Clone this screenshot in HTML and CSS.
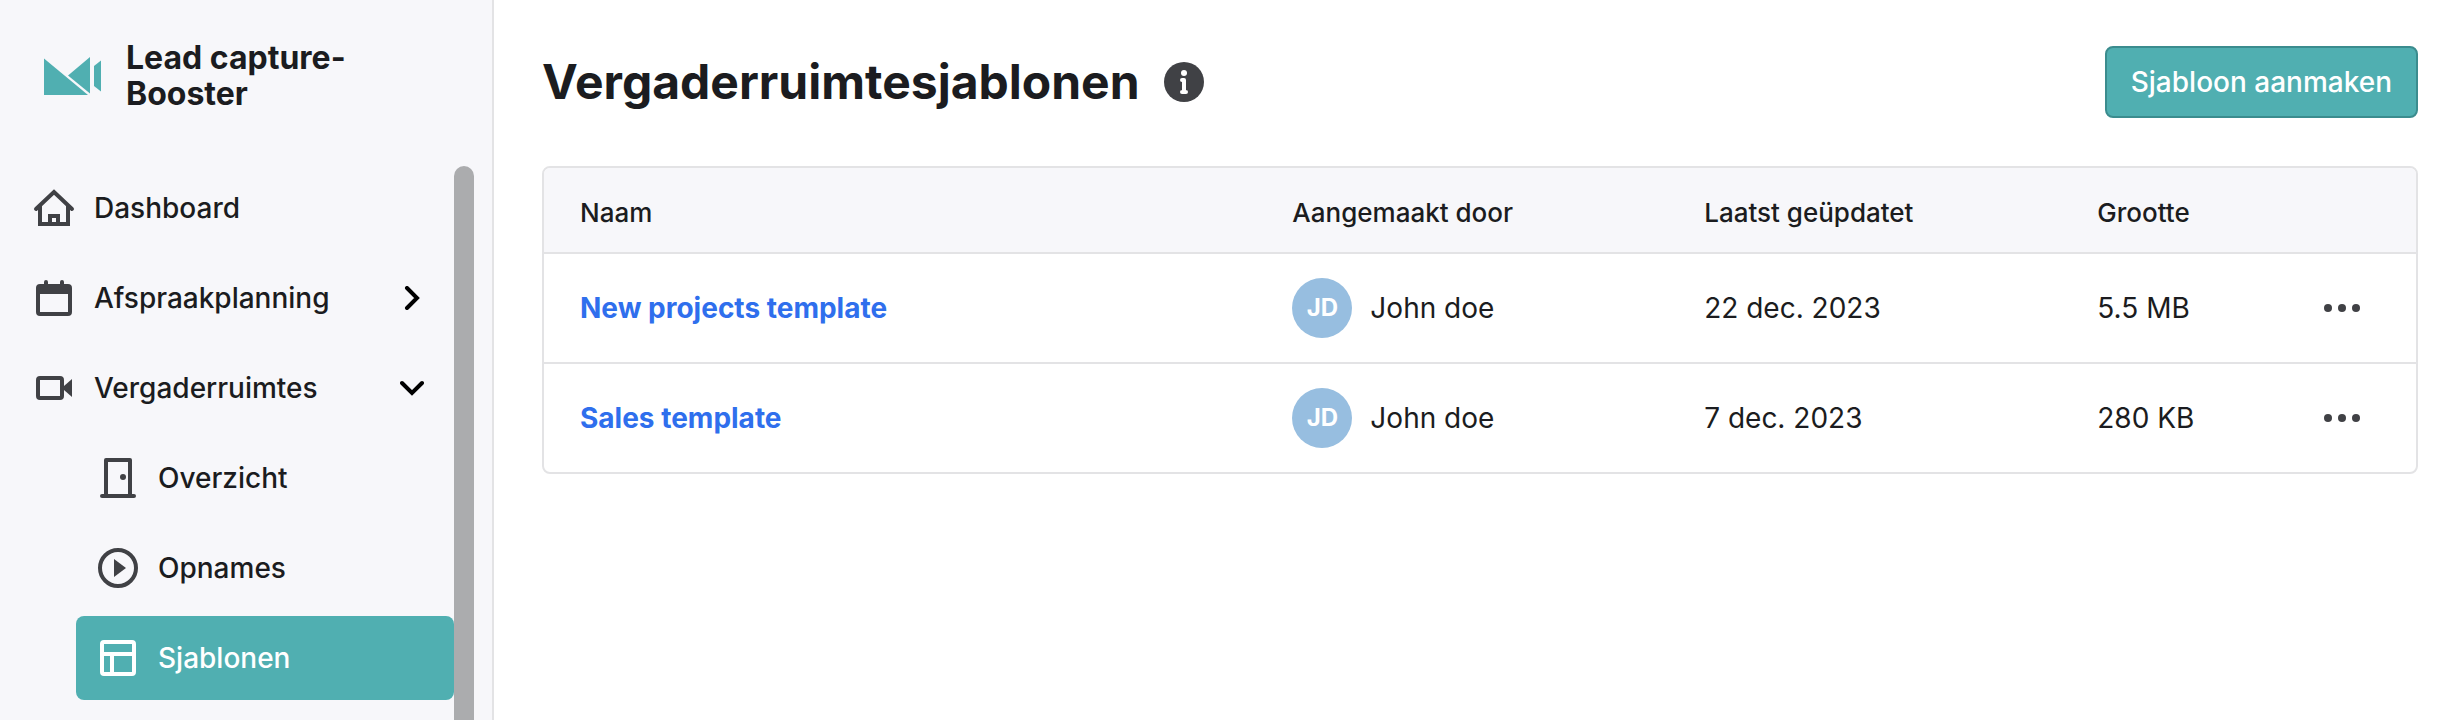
FILE: index.html
```html
<!DOCTYPE html>
<html lang="nl">
<head>
<meta charset="utf-8">
<meta name="viewport" content="width=device-width, initial-scale=1">
<title>Vergaderruimtesjablonen</title>
<link rel="stylesheet" href="styles.css">
</head>
<body>
<div class="app">
  <aside class="sidebar">
    <div class="brand">
      <svg class="brand-logo" viewBox="0 0 58 40" aria-hidden="true">
        <path d="M0 2.500 L44 39 H0 Z"/>
        <path d="M24 19.500 L46 1 V37.500 Z"/>
        <path d="M50 10 L57 4.500 V35.500 L50 30 Z"/>
      </svg>
      <span class="brand-name">Lead capture-Booster</span>
    </div>
    <div class="nav-scroll">
      <nav class="nav">
        <a class="nav-item" href="#">
          <svg class="icon" viewBox="0 0 40 40" aria-hidden="true"><path class="line" stroke-linecap="round" d="M2 21 L20 4 L38 21"/><path class="line" d="M6 18 V36 H34 V18 M16 36 V28 H24 V36"/></svg>
          <span>Dashboard</span>
        </a>
        <a class="nav-item" href="#">
          <svg class="icon" viewBox="0 0 40 40" aria-hidden="true"><rect class="line" x="4" y="8" width="32" height="28" rx="2"/><path class="fill" d="M4 7 H36 V16 H4 Z"/><path class="line" stroke-linecap="round" d="M12 4 V8 M28 4 V8"/></svg>
          <span>Afspraakplanning</span>
          <svg class="chevron" viewBox="0 0 24 24" aria-hidden="true"><path d="M7 2 L17 12 L7 22"/></svg>
        </a>
        <a class="nav-item" href="#">
          <svg class="icon" viewBox="0 0 40 40" aria-hidden="true"><rect class="line" x="4" y="10" width="24" height="20" rx="2"/><path class="fill" d="M30 18 L38 11 V29 L30 22 Z"/></svg>
          <span>Vergaderruimtes</span>
          <svg class="chevron" viewBox="0 0 24 24" aria-hidden="true"><path d="M2 7 L12 17 L22 7"/></svg>
        </a>
        <div class="subnav">
          <a class="nav-item" href="#">
            <svg class="icon" viewBox="0 0 40 40" aria-hidden="true"><path class="line" stroke-linejoin="round" d="M8 38 V2 H32 V38"/><path class="line" stroke-linecap="round" d="M4 38 H36"/><circle class="fill" cx="25" cy="19" r="3"/></svg>
            <span>Overzicht</span>
          </a>
          <a class="nav-item" href="#">
            <svg class="icon" viewBox="0 0 40 40" aria-hidden="true"><circle class="line" cx="20" cy="20" r="18"/><path class="fill" d="M16 11 L28 20 L16 29 Z"/></svg>
            <span>Opnames</span>
          </a>
          <a class="nav-item active" href="#" aria-current="page">
            <svg class="icon" viewBox="0 0 40 40" aria-hidden="true"><rect class="line" x="4" y="4" width="32" height="32" rx="2"/><path class="line" d="M4 16 H36 M14 16 V36"/></svg>
            <span>Sjablonen</span>
          </a>
        </div>
      </nav>
      <div class="scrollbar"></div>
    </div>
  </aside>
  <main class="main">
    <header class="page-header">
      <h1>Vergaderruimtesjablonen</h1>
      <button class="info" type="button" aria-label="Informatie">
        <svg viewBox="0 0 40 40" aria-hidden="true"><circle class="fill" cx="20" cy="20" r="20"/><circle cx="20" cy="11" r="3" fill="#fff"/><path d="M18 18 H20 V30 M18 30 H22" fill="none" stroke="#fff" stroke-width="4" stroke-linecap="round" stroke-linejoin="round"/></svg>
      </button>
      <button class="create" type="button">Sjabloon aanmaken</button>
    </header>
    <div class="table-card">
      <table>
        <colgroup><col class="col-name"><col class="col-author"><col class="col-date"><col class="col-size"><col></colgroup>
        <thead>
          <tr><th scope="col">Naam</th><th scope="col">Aangemaakt door</th><th scope="col">Laatst geüpdatet</th><th scope="col">Grootte</th><td></td></tr>
        </thead>
        <tbody>
          <tr>
            <td><a href="#">New projects template</a></td>
            <td><div class="author"><span class="avatar">JD</span><span>John doe</span></div></td>
            <td>22 dec. 2023</td>
            <td>5.5 MB</td>
            <td><button class="more" type="button" aria-label="Meer opties"><svg viewBox="0 0 40 40" aria-hidden="true"><circle cx="6" cy="20" r="4"/><circle cx="20" cy="20" r="4"/><circle cx="34" cy="20" r="4"/></svg></button></td>
          </tr>
          <tr>
            <td><a href="#">Sales template</a></td>
            <td><div class="author"><span class="avatar">JD</span><span>John doe</span></div></td>
            <td>7 dec. 2023</td>
            <td>280 KB</td>
            <td><button class="more" type="button" aria-label="Meer opties"><svg viewBox="0 0 40 40" aria-hidden="true"><circle cx="6" cy="20" r="4"/><circle cx="20" cy="20" r="4"/><circle cx="34" cy="20" r="4"/></svg></button></td>
          </tr>
        </tbody>
      </table>
    </div>
  </main>
</div>
</body>
</html>
```

FILE: styles.css
```css
* { box-sizing: border-box; }
body {
  margin: 0;
  font: 28px/40px Inter, "Liberation Sans", sans-serif;
  color: #1b1c20;
  background: #fff;
}
a { color: inherit; text-decoration: none; }
button { font: inherit; border: 0; background: none; padding: 0; cursor: pointer; }
svg { display: block; flex: none; }
.app { display: flex; height: 100vh; }
.sidebar {
  display: flex;
  flex-direction: column;
  width: 494px;
  flex: none;
  background: #f7f7fa;
  border-right: 2px solid #e3e3e5;
}
.brand { display: flex; align-items: center; gap: 24px; padding: 40px 96px 54px 44px; }
.brand-logo { width: 58px; height: 40px; fill: #50afb1; }
.brand-name { font-size: 32px; line-height: 36px; font-weight: 700; }
.nav-scroll { display: flex; flex: 1; min-height: 0; overflow: hidden; padding-right: 18px; }
.nav { flex: 1; min-width: 0; }
.nav-item {
  display: flex;
  align-items: center;
  gap: 20px;
  height: 84px;
  margin-bottom: 6px;
  padding: 0 30px 0 34px;
  font-weight: 500;
}
.subnav { padding-left: 76px; }
.subnav .nav-item { padding-left: 22px; border-radius: 8px; }
.nav-item.active { background: #50afb1; color: #fff; }
.icon { width: 40px; height: 40px; color: #404145; overflow: visible; }
.active .icon { color: #fff; }
.line { fill: none; stroke: currentColor; stroke-width: 4; }
.fill { fill: currentColor; }
.chevron {
  width: 24px;
  height: 24px;
  margin-left: auto;
  fill: none;
  stroke: #000;
  stroke-width: 4;
  stroke-linecap: round;
}
.scrollbar { width: 20px; background: #abacae; border-radius: 10px 10px 0 0; }
.main { flex: 1; min-width: 0; padding: 46px 32px 40px 48px; }
.page-header { display: flex; align-items: center; margin-bottom: 48px; }
h1 { margin: 0 24px 0 0; font-size: 48px; line-height: 60px; font-weight: 700; }
.info { color: #404145; }
.info svg { width: 40px; height: 40px; }
.create {
  margin-left: auto;
  padding: 14px 24px;
  border: 2px solid #3b8c8e;
  border-radius: 8px;
  background: #50afb1;
  color: #fff;
  font-weight: 500;
}
.table-card { border: 2px solid #e3e3e5; border-radius: 8px; overflow: hidden; }
table { width: 100%; table-layout: fixed; border-collapse: separate; border-spacing: 0; }
.col-name { width: 38%; }
.col-author { width: 22%; }
.col-date { width: 21%; }
.col-size { width: 12%; }
th, td { padding: 0 0 0 37px; text-align: left; vertical-align: middle; }
th:first-child, td:first-child { padding-left: 36px; }
thead th, thead td { height: 86px; padding-top: 6px; background: #f7f7fa; border-bottom: 2px solid #e3e3e5; font-size: 26px; font-weight: 500; }
tbody td { height: 108px; }
tbody tr + tr td { height: 110px; border-top: 2px solid #e3e3e5; }
tbody a { color: #2f6fed; font-weight: 700; }
.author { display: flex; align-items: center; gap: 18px; }
.avatar {
  display: grid;
  place-items: center;
  width: 60px;
  height: 60px;
  border-radius: 50%;
  background: #97bee0;
  color: #fff;
  font-size: 24px;
  font-weight: 700;
}
.more { display: block; }
.more svg { width: 40px; height: 40px; fill: #404145; }
```
